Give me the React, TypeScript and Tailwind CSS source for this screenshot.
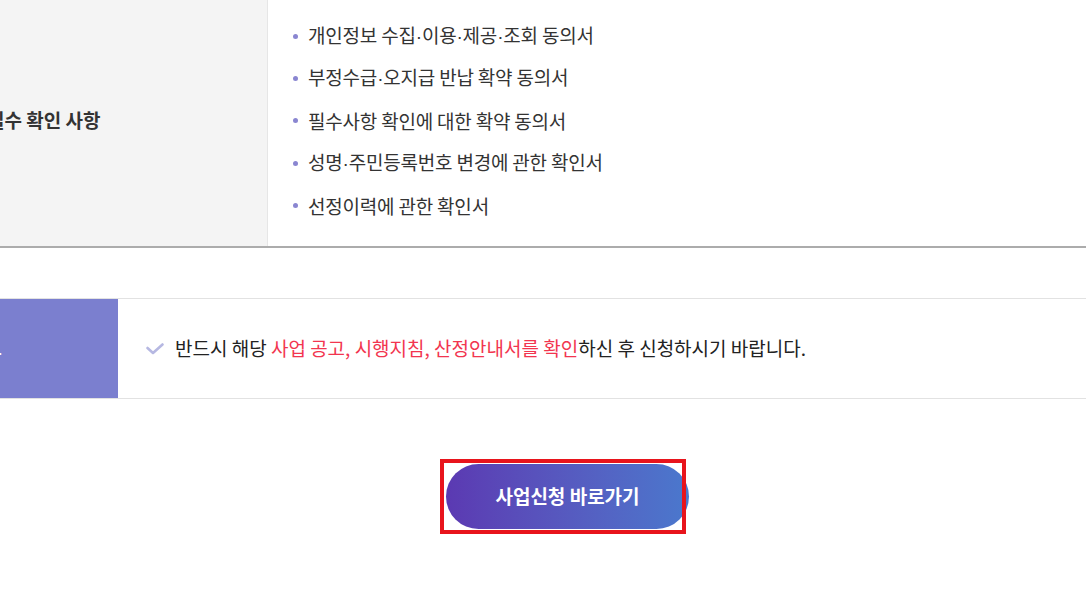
import React from "react";

const items = [
  "개인정보 수집·이용·제공·조회 동의서",
  "부정수급·오지급 반납 확약 동의서",
  "필수사항 확인에 대한 확약 동의서",
  "성명·주민등록번호 변경에 관한 확인서",
  "선정이력에 관한 확인서",
];

function WithDots({ text }: { text: string }) {
  const parts = text.split("·");
  return (
    <>
      {parts.map((p, i) => (
        <React.Fragment key={i}>
          {i > 0 && <span style={{ fontFamily: '"Liberation Sans", sans-serif' }}>·</span>}
          {p}
        </React.Fragment>
      ))}
    </>
  );
}

export default function App() {
  return (
    <div
      className="relative w-[1086px] h-[603px] overflow-hidden bg-white text-[#333]"
      style={{ fontFamily: '"Noto Sans CJK KR", "Noto Sans", sans-serif' }}
    >
      {/* Section 1 */}
      <div className="flex h-[248px] border-b-2 border-[#acacac]">
        <div className="w-[268px] shrink-0 bg-[#f4f4f4] border-r border-[#e6e6e6] flex items-center pb-[6px] overflow-hidden">
          <span className="ml-[-13px] text-[19px] font-bold text-[#333] whitespace-nowrap">
            필수 확인 사항
          </span>
        </div>
        <ul className="flex flex-col pl-[25px] pt-[15px]">
          {items.map((t) => (
            <li key={t} className="flex items-center h-[42.4px]">
              <span className="w-[5px] h-[5px] rounded-full bg-[#8a86d1] mr-[10px]" />
              <span className="text-[19px] tracking-[-0.2px] text-[#333] whitespace-nowrap">
                <WithDots text={t} />
              </span>
            </li>
          ))}
        </ul>
      </div>

      {/* Section 2 */}
      <div className="mt-[50px] flex h-[101px] border-t border-b border-[#e2e2e2]">
        <div className="w-[118px] shrink-0 bg-[#7b7fcf] flex items-center pt-[16px] overflow-hidden">
          <span className="ml-[-15px] text-[18px] font-bold text-white whitespace-nowrap">항</span>
        </div>
        <div className="flex items-center pl-[28px]">
          <svg width="18" height="12" viewBox="0 0 18 12" className="mr-[11px] mt-[1px]">
            <path d="M1.5 5 L7 10 L16.5 1.5" fill="none" stroke="#b6b8e2" strokeWidth="2.6" strokeLinecap="round" strokeLinejoin="round" />
          </svg>
          <p className="text-[19px] text-[#222] whitespace-nowrap">
            반드시 해당 <span className="text-[#f2354f]">사업 공고, 시행지침, 산정안내서를 확인</span>하신 후 신청하시기 바랍니다.
          </p>
        </div>
      </div>

      {/* Button */}
      <div className="relative ml-[446px] mt-[65px] w-[243px]">
        <button className="w-[243px] h-[65px] rounded-full bg-gradient-to-r from-[#5b39b2] to-[#4a78cd] text-white text-[19px] font-bold">
          사업신청 바로가기
        </button>
        <div className="absolute left-[-6px] top-[-5px] w-[246px] h-[75px] border-[4px] border-[#e8141c] pointer-events-none" />
      </div>
    </div>
  );
}
